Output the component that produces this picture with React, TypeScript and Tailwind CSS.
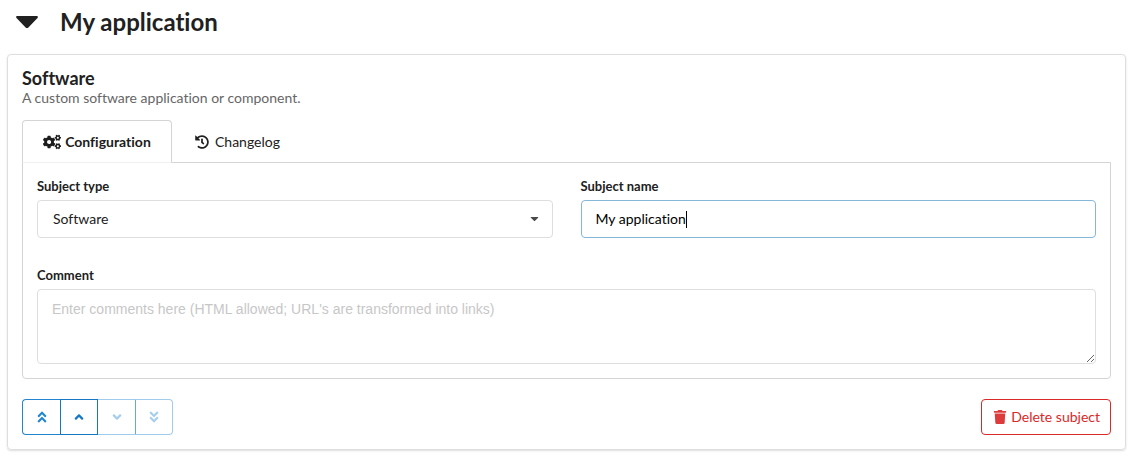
import { useState } from "react";
import type { ReactNode } from "react";
import {
  FaAngleDoubleDown,
  FaAngleDoubleUp,
  FaAngleDown,
  FaAngleUp,
  FaCaretDown,
  FaCogs,
  FaHistory,
  FaTrash,
} from "react-icons/fa";

function MoveButton({
  label,
  disabled = false,
  className,
  children,
}: {
  label: string;
  disabled?: boolean;
  className: string;
  children: ReactNode;
}) {
  return (
    <button
      type="button"
      aria-label={label}
      disabled={disabled}
      className={`flex h-9 items-center justify-center border-y text-sm ${className}`}
    >
      {children}
    </button>
  );
}

export default function App() {
  const [name, setName] = useState("My application");
  const [type, setType] = useState("Software");
  const [comment, setComment] = useState("");

  return (
    <main className="bg-white px-[7px] pb-2 font-['Lato',sans-serif] text-sm text-[#212121] [font-variant-ligatures:none]">
      <h1 className="flex h-[54px] items-center pb-2.5 pl-[9px] text-2xl font-bold">
        <button type="button" aria-label="Collapse subject" className="mr-[22px] flex">
          <svg viewBox="0 0 22 12" className="h-3 w-[22px]" fill="currentColor" aria-hidden="true">
            <path d="M1.3 0h19.4c1.1 0 1.6 1.2.8 1.9l-9.1 9.5c-.8.8-2 .8-2.8 0L.5 1.9C-.3 1.2.2 0 1.3 0z" />
          </svg>
        </button>
        My application
      </h1>

      <section className="rounded border border-[#dededf] px-3.5 pt-[13px] pb-3.5 shadow-[0_1px_2px_0_rgba(34,36,38,0.15)]">
        <h2 className="text-lg leading-5 font-bold">Software</h2>
        <p className="text-sm leading-5 text-[#666666]">A custom software application or component.</p>

        <div role="tablist" className="mt-3 flex h-[42px]">
          <button
            type="button"
            role="tab"
            aria-selected="true"
            className="z-10 -mb-px flex w-[150px] items-center justify-center gap-1 rounded-t border border-[#d4d4d5] border-b-[#f0f0f0] bg-white text-sm font-bold text-[#1c1c1c]"
          >
            <FaCogs className="h-4 w-[18px]" aria-hidden="true" />
            Configuration
          </button>
          <button type="button" role="tab" aria-selected="false" className="-mb-px flex items-center gap-1.5 px-[23px]">
            <FaHistory className="text-sm" aria-hidden="true" />
            Changelog
          </button>
        </div>

        <form className="rounded-b border border-[#d4d4d5] px-3.5 pt-3.5 pb-3.5" onSubmit={(e) => e.preventDefault()}>
          <div className="grid grid-cols-2 gap-7">
            <div>
              <label htmlFor="subject-type" className="mb-1 block text-[13px] leading-[19px] font-bold">
                Subject type
              </label>
              <div className="relative">
                <select
                  id="subject-type"
                  value={type}
                  onChange={(e) => setType(e.target.value)}
                  className="block h-[38px] w-full appearance-none rounded border border-[#dededf] bg-white px-[15px] text-sm outline-none"
                >
                  <option>Software</option>
                </select>
                <FaCaretDown
                  className="pointer-events-none absolute top-3 right-3 text-[13px] text-[#4a4a4a]"
                  aria-hidden="true"
                />
              </div>
            </div>
            <div>
              <label htmlFor="subject-name" className="mb-1 block text-[13px] leading-[19px] font-bold">
                Subject name
              </label>
              <label
                htmlFor="subject-name"
                className="flex h-[38px] items-center overflow-hidden rounded border border-[#85b7d9] px-3.5 text-sm text-black"
              >
                <input
                  id="subject-name"
                  type="text"
                  value={name}
                  onChange={(e) => setName(e.target.value)}
                  className="max-w-full caret-transparent outline-none [field-sizing:content]"
                />
                <span className="h-[17px] w-px shrink-0 bg-black" />
              </label>
            </div>
          </div>

          <div className="mt-7">
            <label htmlFor="comment" className="mb-1 block text-[13px] leading-[19px] font-bold">
              Comment
            </label>
            <textarea
              id="comment"
              value={comment}
              onChange={(e) => setComment(e.target.value)}
              placeholder="Enter comments here (HTML allowed; URL's are transformed into links)"
              className="block h-[75px] w-full resize-y rounded border border-[#dededf] px-3.5 py-2.5 font-['Liberation_Sans',sans-serif] text-sm leading-[18px] outline-none placeholder:text-[#c7c7c7]"
            />
          </div>
        </form>

        <div className="mt-5 flex items-center justify-between">
          <div className="flex">
            <MoveButton label="Move to top" className="w-[38px] rounded-l border-l border-[#2185d0] text-[#2185d0]">
              <FaAngleDoubleUp />
            </MoveButton>
            <MoveButton label="Move up" className="w-[38px] border-x border-[#1678c2] text-[#1678c2]">
              <FaAngleUp />
            </MoveButton>
            <MoveButton label="Move down" disabled className="w-[37px] border-[#a1cbea] text-[#a6ceec]">
              <FaAngleDown />
            </MoveButton>
            <MoveButton
              label="Move to bottom"
              disabled
              className="w-[38px] rounded-r border-x border-[#a1cbea] border-l-[#64a9de] text-[#a6ceec]"
            >
              <FaAngleDoubleDown />
            </MoveButton>
          </div>
          <button
            type="button"
            className="flex h-9 items-center gap-1 rounded border border-[#db2828] pr-2.5 pl-[11px] text-sm text-[#db2828]"
          >
            <FaTrash className="w-3.5 opacity-90" aria-hidden="true" />
            Delete subject
          </button>
        </div>
      </section>
    </main>
  );
}
